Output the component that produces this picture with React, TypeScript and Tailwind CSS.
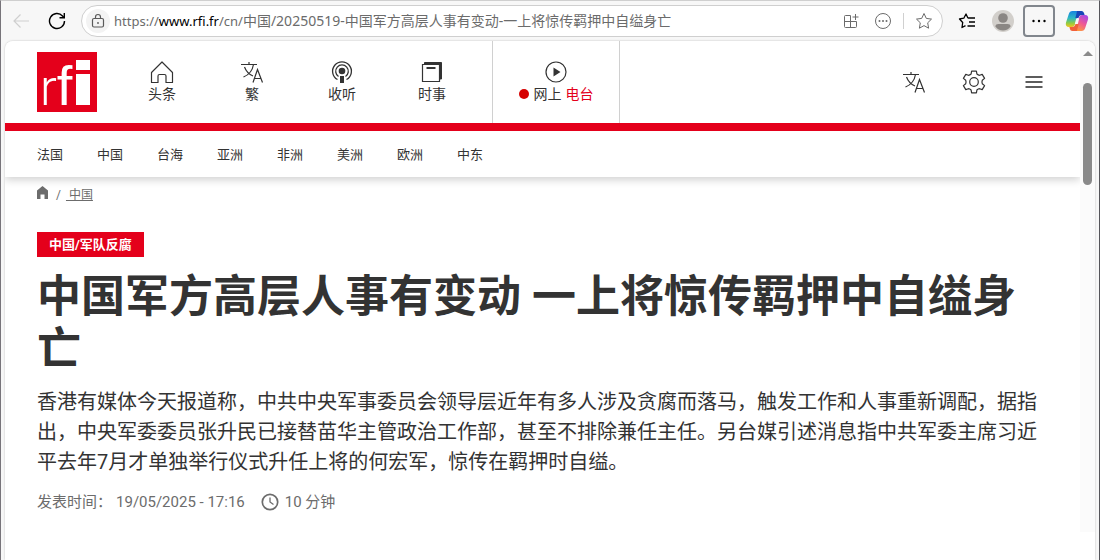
import React from "react";

interface NavItem {
	label: string;
	icon: React.ReactNode;
}

const TranslateIcon = () => (
	<svg width="24" height="24" viewBox="0 0 24 24" fill="none" stroke="currentColor" strokeWidth="1.2">
		<path d="M1 4.5h16M9 2v2.5M4.500 7c1.500 4 5 7.500 8.500 9M13.500 4.500c-1 6-5 10.500-10 12.500" />
		<path d="M13 22.500l4.500-13 5 13M14.500 18.500h6.500" />
	</svg>
);

const HomeIcon = () => (
	<svg width="24" height="24" viewBox="0 0 24 24" fill="none" stroke="currentColor" strokeWidth="1.2">
		<path d="M12 2L1.500 12.500v10h6.500v-6.500a1.500 1.500 0 0 1 1.500-1.500h5a1.500 1.500 0 0 1 1.500 1.500v6.500h6.500v-10z" strokeLinejoin="round" />
	</svg>
);

const PodcastIcon = () => (
	<svg width="24" height="24" viewBox="0 0 24 24" fill="none" stroke="currentColor" strokeWidth="1.300">
		<path d="M7.500 19.500a9.400 9.400 0 1 1 9 0" />
		<path d="M8.500 16.500a6.300 6.300 0 1 1 7 0" />
		<circle cx="12" cy="11" r="3.300" fill="currentColor" stroke="none" />
		<path d="M10 16h4v7h-4z" fill="currentColor" stroke="none" />
	</svg>
);

const NewsIcon = () => (
	<svg width="24" height="24" viewBox="0 0 24 24" fill="none" stroke="currentColor">
		<path d="M4.500 2.500H21.500v16.500H20V4.500H4.500z" fill="currentColor" />
		<path d="M2.500 4.500h17v17H2.500z" fill="#fff" strokeWidth="1.200" />
		<path d="M6.500 8h9" strokeWidth="2" />
	</svg>
);

const PlayIcon = () => (
	<svg width="24" height="24" viewBox="0 0 24 24" fill="none" stroke="currentColor" strokeWidth="1.200">
		<circle cx="12" cy="12" r="10" />
		<path d="M9.500 7.500v9l7-4.500z" fill="currentColor" stroke="none" />
	</svg>
);

const GearIcon = () => (
	<svg width="24" height="24" viewBox="0 0 24 24" fill="none" stroke="currentColor" strokeWidth="1.200" strokeLinejoin="round">
		<circle cx="12" cy="12" r="4.300" />
		<path d="M9.600 1.200h4.800l.5 2.800c1 .9 1.600 1.200 2.700 1.300l2.600-.9 2.400 4-2.300 1.900c-.5 1.200-.5 2.200 0 3.400l2.300 1.900-2.400 4-2.600-.9c-1.100.1-1.700.4-2.700 1.300l-.5 2.800H9.600L9.100 20c-1-.9-1.600-1.200-2.700-1.300l-2.600.9-2.400-4 2.300-1.900c.5-1.200.5-2.200 0-3.400L1.400 8.400l2.400-4 2.600.9c1.100-.1 1.700-.4 2.700-1.300z" />
	</svg>
);

const MenuIcon = () => (
	<svg width="24" height="24" viewBox="0 0 24 24" stroke="#5c5c5c" strokeWidth="2">
		<path d="M3.500 7h17M3.500 12h17M3.500 17h17" />
	</svg>
);

const Logo = () => (
	<svg className="overflow-visible" width="60" height="60" viewBox="0 0 60 60" role="img" aria-label="rfi">
		<path fill="#e4001b" d="M0 0h60v60H0z" />
		<text x="3" y="53" fill="#fff">
			<tspan className="font-light font-[Roboto,sans-serif]" fontSize="50">r</tspan>
			<tspan className="font-['Liberation_Sans',sans-serif]" fontSize="56">f</tspan>
		</text>
		<path fill="#fff" d="M39 8h14v10H39zM39 22h14v31H39z" />
	</svg>
);

const CopilotIcon = () => (
	<svg width="24" height="24" viewBox="0 0 24 24">
		<defs>
			<linearGradient id="cool" x1="0" y1="0" x2="0" y2="1">
				<stop offset="0" stopColor="#1583e0" />
				<stop offset=".45" stopColor="#2db8c4" />
				<stop offset=".75" stopColor="#8ecb45" />
				<stop offset="1" stopColor="#f2c51d" />
			</linearGradient>
			<linearGradient id="warm" x1="0.800" y1="0" x2="0.300" y2="1">
				<stop offset="0" stopColor="#a548e8" />
				<stop offset=".5" stopColor="#ee5896" />
				<stop offset="1" stopColor="#ff9b3d" />
			</linearGradient>
		</defs>
		<path fill="url(#cool)" d="M7.500 2H15L10.800 13c-1 3.500-1.800 5-4.300 5H4c-2.700 0-3.700-2-3-4.500L3.800 5C4.400 3 5.500 2 7.500 2z" />
		<path fill="#1746b8" d="M12 2h4.500c1.500 0 2.200 1 2.600 2.300L19.600 6h-2.500c-2.100 0-3 1-3.600 3h-3.200l1.200-4.500c.3-1.200.3-2 .5-2.500z" />
		<path fill="url(#warm)" d="M16.500 22H9l4.200-11c1-3.500 1.800-5 4.300-5H20c2.700 0 3.700 2 3 4.500L20.200 19c-.6 2-1.700 3-3.700 3z" />
		<path fill="#f2603a" d="M12 22H7.500c-1.500 0-2.200-1-2.600-2.300L4.400 18h2.500c2.100 0 3-1 3.600-3h3.200l-1.200 4.500c-.3 1.200-.3 2-.5 2.500z" />
		<path fill="#f7f7f7" d="M11.200 9.500h3L12.800 15h-3z" />
	</svg>
);

const navItems: NavItem[] = [
	{label: "头条", icon: <HomeIcon />},
	{label: "繁", icon: <TranslateIcon />},
	{label: "收听", icon: <PodcastIcon />},
	{label: "时事", icon: <NewsIcon />},
];

const regions = ["法国", "中国", "台海", "亚洲", "非洲", "美洲", "欧洲", "中东"];

const BrowserBar = () => (
	<div className="flex items-center h-10 pr-0.5 text-[#6b6b6b]">
		<button aria-label="后退" className="w-8 flex justify-center text-[#cfcfcf]">
			<svg width="18" height="18" viewBox="0 0 18 18" fill="none" stroke="currentColor" strokeWidth="1.200">
				<path d="M17 9H2M8.500 2.500L2 9l6.500 6.500" />
			</svg>
		</button>
		<button aria-label="刷新" className="w-8 ml-1 flex justify-center text-black">
			<svg width="18" height="18" viewBox="0 0 18 18" fill="none" stroke="currentColor" strokeWidth="1.400">
				<path d="M16.500 9a7.500 7.500 0 1 1-2-5.100L16 5.500" />
				<path d="M16.300 1v4.800h-4.800" />
			</svg>
		</button>
		<div className="flex-1 flex items-center h-8 ml-2 pl-1 pr-0.5 rounded-full border border-[#cfcfcf] bg-white">
			<button aria-label="网站信息" className="w-6 h-6 rounded-full bg-[#f3f3f3] flex items-center justify-center text-[#5a5a5a]">
				<svg width="14" height="16" viewBox="0 0 14 16" fill="none" stroke="currentColor" strokeWidth="1.200">
					<rect x="1.500" y="5.500" width="11" height="8.500" rx="1.500" />
					<path d="M4.500 5.500V4a2.500 2.500 0 0 1 5 0v1.500" />
					<circle cx="7" cy="10" r=".9" fill="currentColor" stroke="none" />
				</svg>
			</button>
			<p className="flex-1 ml-1 text-sm whitespace-nowrap font-['Noto_Sans','Noto_Sans_CJK_SC',sans-serif]">
				<span className="text-[13px]">
					https://<span className="text-black">www.rfi.fr</span>/cn/
				</span>
				中国/20250519-中国军方高层人事有变动-一上将惊传羁押中自缢身亡
			</p>
			<button aria-label="应用" className="w-8 flex justify-center">
				<svg width="16" height="16" viewBox="0 0 16 16" fill="none" stroke="currentColor">
					<path d="M7.500 2.500h-5a1 1 0 0 0-1 1v10a1 1 0 0 0 1 1h10a1 1 0 0 0 1-1v-5h-12M7.500 2.500v12M12.500 1v6M9.500 4h6" />
				</svg>
			</button>
			<button aria-label="更多操作" className="w-8 flex justify-center">
				<svg width="18" height="18" viewBox="0 0 18 18" fill="none" stroke="currentColor">
					<circle cx="9" cy="9" r="7.500" />
					<g fill="currentColor" stroke="none">
						<circle cx="5.500" cy="9" r="1" />
						<circle cx="9" cy="9" r="1" />
						<circle cx="12.500" cy="9" r="1" />
					</g>
				</svg>
			</button>
			<span className="w-px h-4 mx-1 bg-[#d0d0d0]" />
			<button aria-label="收藏" className="w-8 flex justify-center">
				<svg width="18" height="18" viewBox="0 0 18 18" fill="none" stroke="currentColor" strokeLinejoin="round">
					<path d="M9 1.500l2.300 4.900 5.200.7-3.800 3.700.9 5.400L9 13.600l-4.600 2.600.9-5.400L1.500 7.100l5.200-.7z" />
				</svg>
			</button>
		</div>
		<div className="flex items-center ml-2 text-black">
			<button aria-label="收藏夹" className="w-8 flex justify-center">
				<svg width="18" height="18" viewBox="0 0 18 18" fill="none" stroke="currentColor" strokeWidth="1.300">
					<path d="M10 6.200L8 2 5.800 6.200 1.500 7l3.200 3.500-.7 5L7.500 13.600M10 6h7M11 10h6M9.500 14H17" strokeLinejoin="round" />
				</svg>
			</button>
			<button aria-label="个人资料" className="w-8 ml-1 flex justify-center">
				<svg width="22" height="22" viewBox="0 0 22 22">
					<circle cx="11" cy="11" r="11" fill="#d2cfcb" />
					<circle cx="11" cy="8" r="4.800" fill="#8a8683" />
					<path d="M3.500 16.500c0-1.800 1.200-2.500 3-2.500h9c1.800 0 3 .7 3 2.500C17 19 14 20.500 11 20.500S5 19 3.500 16.500z" fill="#8a8683" />
				</svg>
			</button>
			<button aria-label="设置及其他" className="w-8 h-8 ml-1 flex items-center justify-center rounded-sm border-2 border-[#81868d]">
				<svg width="16" height="4" viewBox="0 0 16 4" fill="currentColor">
					<circle cx="2.500" cy="2" r="1.200" />
					<circle cx="8" cy="2" r="1.200" />
					<circle cx="13.500" cy="2" r="1.200" />
				</svg>
			</button>
			<button aria-label="Copilot" className="w-8 ml-1.5 flex justify-center">
				<CopilotIcon />
			</button>
		</div>
	</div>
);

const SiteHeader = () => (
	<header className="bg-white shadow-[0_3px_8px_rgba(0,0,0,0.18)]">
		<div className="flex h-[90px] pl-8 pr-4 border-b-8 border-[#e4001b]">
			<a href="#home" className="mt-[11px]">
				<Logo />
			</a>
			<nav className="flex ml-5 text-sm leading-5">
				{navItems.map((item) => (
					<a key={item.label} href="#nav" className="w-[90px] pt-[19px] flex flex-col items-center">
						{item.icon}
						{item.label}
					</a>
				))}
			</nav>
			<a
				href="#live"
				className="w-32 ml-[15px] pt-[19px] flex flex-col items-center text-sm leading-5 border-x border-[#d0d0d0]"
			>
				<PlayIcon />
				<span className="flex items-center">
					<span className="w-[10px] h-[10px] mr-[5px] rounded-full bg-[#d60000]" />
					网上<span className="ml-1 text-[#e4001b]">电台</span>
				</span>
			</a>
			<div className="flex items-center ml-auto">
				<button aria-label="语言" className="w-[60px] flex justify-center">
					<TranslateIcon />
				</button>
				<button aria-label="设置" className="w-[60px] flex justify-center">
					<GearIcon />
				</button>
				<button aria-label="菜单" className="w-[60px] flex justify-center">
					<MenuIcon />
				</button>
			</div>
		</div>
		<nav className="flex items-center h-[46px] pl-8 pt-0.5 text-[13px]">
			{regions.map((region) => (
				<a key={region} href="#region" className="w-[60px]">
					{region}
				</a>
			))}
		</nav>
	</header>
);

const Article = () => (
	<main className="px-8 pt-2">
		<div className="flex items-center h-5 text-xs text-[#6c6c6c]">
			<a href="#home" aria-label="首页" className="pb-1">
				<svg width="11" height="14" viewBox="0 0 11 14" fill="currentColor">
					<path d="M5.500 0L0 4.500V13h3.500V8.500h4V13H11V4.500z" />
				</svg>
			</a>
			<span className="ml-2">/</span>
			<a href="#china" className="ml-[5px] underline whitespace-pre"> 中国</a>
		</div>
		<a href="#topic" className="inline-block mt-[27px] px-3 h-[25px] leading-[25px] text-[13px] font-bold text-white bg-[#e4001b]">
			中国/军队反腐
		</a>
		<h1 className="mt-[14px] text-[44px] leading-[52px] font-bold">
			中国军方高层人事有变动 一上将惊传羁押中自缢身亡
		</h1>
		<p className="mt-3 text-xl leading-[30px]">
			香港有媒体今天报道称，中共中央军事委员会领导层近年有多人涉及贪腐而落马，触发工作和人事重新调配，据指出，中央军委委员张升民已接替苗华主管政治工作部，甚至不排除兼任主任。另台媒引述消息指中共军委主席习近平去年7月才单独举行仪式升任上将的何宏军，惊传在羁押时自缢。
		</p>
		<div className="flex items-center mt-[15px] pb-10 text-[15px] leading-5 text-[#6c6c6c]">
			<span>发表时间：</span>
			<time className="ml-1">19/05/2025 - 17:16</time>
			<svg className="ml-4" width="18" height="18" viewBox="0 0 18 18" fill="none" stroke="currentColor" strokeWidth="1.700">
				<circle cx="9" cy="9" r="7.700" />
				<path d="M9 4.500V9l3.500 2.500" strokeWidth="1.300" />
			</svg>
			<span className="ml-[6px]">10 分钟</span>
		</div>
	</main>
);

const App = () => {
	return (
		<div className="min-h-screen flex flex-col px-1 border-x border-t border-l-[#77747a] border-r-[#55555a] border-t-[#cfcfcf] bg-[#f7f7f7]">
			<BrowserBar />
			<div className="flex-1 flex overflow-hidden rounded-t-lg bg-white shadow-[0_0_2px_rgba(0,0,0,0.25)] text-[#333] font-[Roboto,'Noto_Sans_CJK_SC',sans-serif]">
				<div className="flex-1 min-w-0 overflow-hidden">
					<SiteHeader />
					<Article />
				</div>
				<div className="w-[15px] mb-7 pt-[10px] flex flex-col items-center bg-[#fbfbfb]">
					<svg width="10" height="5" viewBox="0 0 10 5" fill="#8a8a8a">
						<path d="M5 0l5 5H0z" />
					</svg>
					<span className="w-[9px] h-[102px] mt-[27px] rounded-full bg-[#8a8a8a]" />
				</div>
			</div>
		</div>
	);
};

export default App;
